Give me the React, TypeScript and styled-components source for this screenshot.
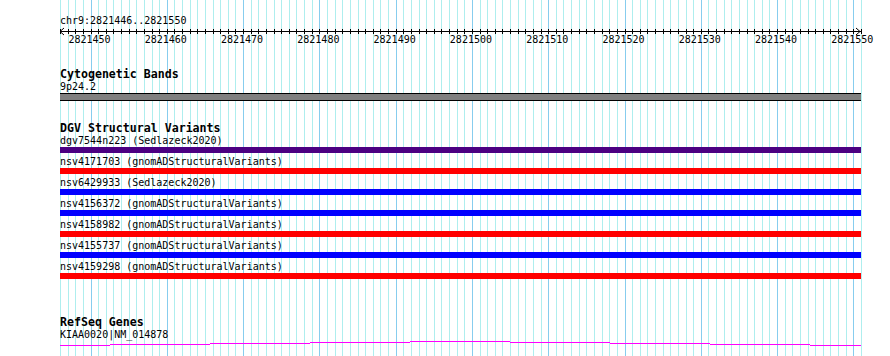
import styled, { createGlobalStyle } from "styled-components";

const BASES = 105;
const VIEW_W = 801;
const LEFT = 60;
const BP = VIEW_W / BASES;
const START = 2821446;

const GlobalStyle = createGlobalStyle`
    html, body {
        margin: 0;
        padding: 0;
        background: #ffffff;
        overflow: hidden;
    }
`;

const Page = styled.div`
    position: relative;
    width: 890px;
    height: 356px;
    overflow: hidden;
    font-family: "DejaVu Sans Mono", "Liberation Mono", monospace;
    font-size: 10px;
    color: #000;
`;

const GridSvg = styled.svg`
    position: absolute;
    left: 0;
    top: 0;
    z-index: 0;
`;

const Content = styled.div`
    position: relative;
    z-index: 1;
    display: flex;
    flex-direction: column;
    width: ${VIEW_W}px;
    margin-left: ${LEFT}px;
`;

const Ruler = styled.div`
    display: flex;
    flex-direction: column;
    padding-top: 15px;
    padding-bottom: 1px;
`;

const LocLabel = styled.div`
    line-height: 12px;
    height: 12px;
    white-space: nowrap;
`;

const Axis = styled.svg`
    display: block;
    margin-top: 1px;
    overflow: visible;
`;

const TickRow = styled.div`
    display: flex;
    height: 12px;
    margin-left: ${-BP - 1}px;
`;

const TickLabel = styled.div`
    flex: 0 0 ${BP * 10}px;
    text-align: center;
    line-height: 12px;
    white-space: nowrap;
`;

const Track = styled.div<{ $gap: number }>`
    display: flex;
    flex-direction: column;
    margin-top: ${(p) => p.$gap}px;
`;

const TrackTitle = styled.div`
    font-weight: bold;
    font-size: 11.6px;
    line-height: 13px;
    height: 13px;
    white-space: nowrap;
`;

const FeatureLabel = styled.div`
    line-height: 12px;
    height: 12px;
    white-space: nowrap;
`;

const BandBar = styled.div`
    height: 6px;
    background: #808080;
    border-top: 1px solid #000;
    border-bottom: 1px solid #000;
`;

const Feature = styled.div<{ $color: string }>`
    height: 6px;
    margin-bottom: 3px;
    background: ${(p) => p.$color};
`;

const GeneSvg = styled.svg`
    display: block;
`;

const variants = [
    { name: "dgv7544n223 (Sedlazeck2020)", color: "#4b0082" },
    { name: "nsv4171703 (gnomADStructuralVariants)", color: "#ff0000" },
    { name: "nsv6429933 (Sedlazeck2020)", color: "#0000ff" },
    { name: "nsv4156372 (gnomADStructuralVariants)", color: "#0000ff" },
    { name: "nsv4158982 (gnomADStructuralVariants)", color: "#ff0000" },
    { name: "nsv4155737 (gnomADStructuralVariants)", color: "#0000ff" },
    { name: "nsv4159298 (gnomADStructuralVariants)", color: "#ff0000" },
];

const baseX = (i: number) => Math.round(LEFT + i * BP) + 0.5;

function GridLines() {
    const lines = [];
    for (let i = 0; i <= BASES; i++) {
        const dark = (i - 4) % 10 === 0;
        lines.push(
            <line
                key={i}
                x1={baseX(i)}
                x2={baseX(i)}
                y1={0}
                y2={356}
                stroke={dark ? "#87cdee" : "#aeeeee"}
                strokeWidth={1}
            />
        );
    }
    return (
        <GridSvg width={890} height={356} shapeRendering="crispEdges">
            {lines}
        </GridSvg>
    );
}

function RulerAxis() {
    const ticks = [];
    for (let i = 0; i <= BASES; i++) {
        const x = baseX(i) - LEFT;
        ticks.push(<line key={i} x1={x} x2={x} y1={1} y2={6} stroke="#000" />);
    }
    return (
        <Axis width={VIEW_W} height={6} shapeRendering="crispEdges">
            <line x1={0} x2={VIEW_W} y1={3.5} y2={3.5} stroke="#000" />
            {ticks}
            <polyline points="4,0 0,3.5 4,7" fill="none" stroke="#000" shapeRendering="auto" />
            <polyline
                points={`${VIEW_W - 5},0 ${VIEW_W - 1},3.5 ${VIEW_W - 5},7`}
                fill="none"
                stroke="#000"
                shapeRendering="auto"
            />
        </Axis>
    );
}

function GeneLine() {
    // intron line steps up toward the middle of the view
    const steps = [
        [0, 50, 4],
        [50, 150, 3],
        [150, 250, 2],
        [250, 350, 1],
        [350, 450, 0],
        [450, 550, 1],
        [550, 650, 2],
        [650, 750, 3],
        [750, VIEW_W, 4],
    ];
    return (
        <GeneSvg width={VIEW_W} height={6} shapeRendering="crispEdges">
            {steps.map(([a, b, y]) => (
                <line key={a} x1={a} x2={b} y1={y + 0.5} y2={y + 0.5} stroke="#ff00ff" />
            ))}
        </GeneSvg>
    );
}

export default function App() {
    const tickLabels = [];
    for (let k = 0; k <= 10; k++) tickLabels.push(START + 4 + k * 10);

    return (
        <Page>
            <GlobalStyle />
            <GridLines />
            <Content>
                <Ruler>
                    <LocLabel>chr9:2821446..2821550</LocLabel>
                    <RulerAxis />
                    <TickRow>
                        {tickLabels.map((t) => (
                            <TickLabel key={t}>{t}</TickLabel>
                        ))}
                    </TickRow>
                </Ruler>

                <Track $gap={21}>
                    <TrackTitle>Cytogenetic Bands</TrackTitle>
                    <FeatureLabel>9p24.2</FeatureLabel>
                    <BandBar />
                </Track>

                <Track $gap={21}>
                    <TrackTitle>DGV Structural Variants</TrackTitle>
                    {variants.map((v) => (
                        <div key={v.name}>
                            <FeatureLabel>{v.name}</FeatureLabel>
                            <Feature $color={v.color} />
                        </div>
                    ))}
                </Track>

                <Track $gap={34}>
                    <TrackTitle>RefSeq Genes</TrackTitle>
                    <FeatureLabel>KIAA0020|NM_014878</FeatureLabel>
                    <GeneLine />
                </Track>
            </Content>
        </Page>
    );
}
